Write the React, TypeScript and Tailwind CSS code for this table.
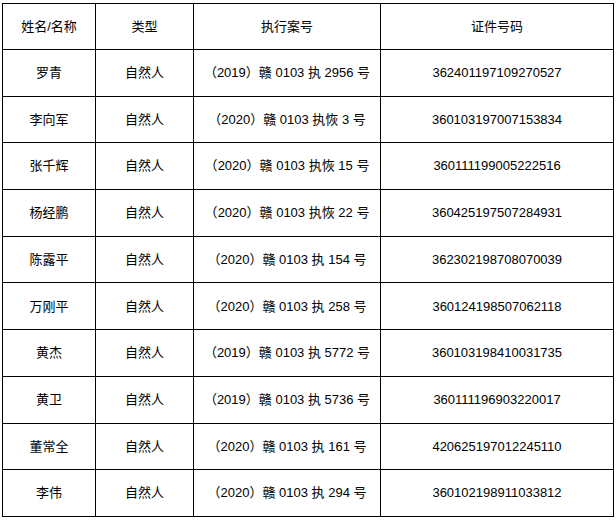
const rows = [
  { name: '罗青', type: '自然人', year: '2019', caseNo: '执 2956 号', id: '362401197109270527' },
  { name: '李向军', type: '自然人', year: '2020', caseNo: '执恢 3 号', id: '360103197007153834' },
  { name: '张千辉', type: '自然人', year: '2020', caseNo: '执恢 15 号', id: '360111199005222516' },
  { name: '杨经鹏', type: '自然人', year: '2020', caseNo: '执恢 22 号', id: '360425197507284931' },
  { name: '陈露平', type: '自然人', year: '2020', caseNo: '执 154 号', id: '362302198708070039' },
  { name: '万刚平', type: '自然人', year: '2020', caseNo: '执 258 号', id: '360124198507062118' },
  { name: '黄杰', type: '自然人', year: '2019', caseNo: '执 5772 号', id: '360103198410031735' },
  { name: '黄卫', type: '自然人', year: '2019', caseNo: '执 5736 号', id: '360111196903220017' },
  { name: '董常全', type: '自然人', year: '2020', caseNo: '执 161 号', id: '420625197012245110' },
  { name: '李伟', type: '自然人', year: '2020', caseNo: '执 294 号', id: '360102198911033812' },
];

const cell = 'border border-black p-0 text-center align-middle font-normal';

export default function App() {
  return (
    <div
      className="min-h-[520px] w-[616px] bg-white pt-[3px] pl-[2px] text-[13px] text-black"
      style={{ fontFamily: '"Liberation Sans", "Noto Sans CJK SC", sans-serif' }}
    >
      <table className="w-[611px] table-fixed border-collapse">
        <colgroup>
          <col className="w-[93px]" />
          <col className="w-[98px]" />
          <col className="w-[187px]" />
          <col className="w-[233px]" />
        </colgroup>
        <thead>
          <tr className="h-[46px]">
            <th className={cell}>姓名/名称</th>
            <th className={cell}>类型</th>
            <th className={cell}>执行案号</th>
            <th className={cell}>证件号码</th>
          </tr>
        </thead>
        <tbody>
          {rows.map((r) => (
            <tr key={r.id} className="h-[46.7px]">
              <td className={cell}>{r.name}</td>
              <td className={cell}>{r.type}</td>
              <td className={cell}>
                （{r.year}）赣 0103 {r.caseNo}
              </td>
              <td className={cell}>{r.id}</td>
            </tr>
          ))}
        </tbody>
      </table>
    </div>
  );
}
